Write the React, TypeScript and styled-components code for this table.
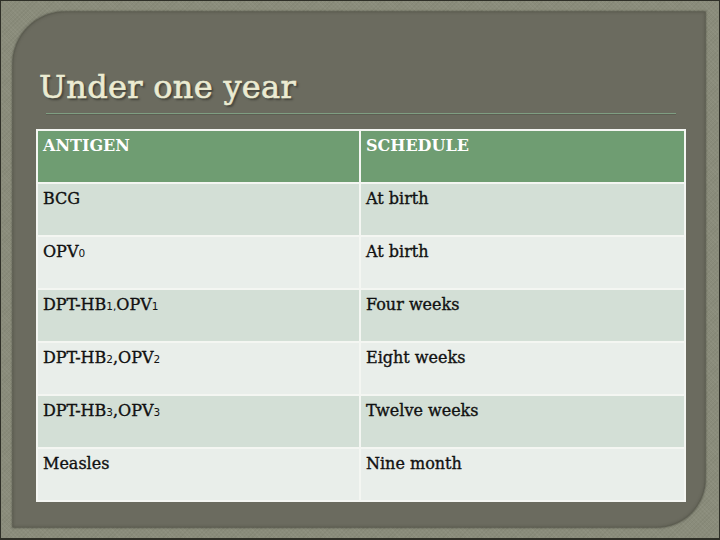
import React from "react";
import styled, { createGlobalStyle } from "styled-components";

const Global = createGlobalStyle`
  html, body { margin: 0; padding: 0; }
  body { width: 720px; height: 540px; overflow: hidden; background: #8a8c7b; }
  #root { width: 720px; height: 540px; }
`;

const Frame = styled.div`
  box-sizing: border-box;
  width: 720px;
  height: 540px;
  padding: 11px 14px 11px 12px;
  background-color: #8a8c7b;
  background-image: repeating-linear-gradient(45deg, rgba(255,255,255,0.04) 0 1px, transparent 1px 3px),
    repeating-linear-gradient(-45deg, rgba(0,0,0,0.04) 0 1px, transparent 1px 3px);
  border: 1px solid #2e2f27;
  border-bottom-width: 2px;
`;

const Panel = styled.div`
  box-sizing: border-box;
  width: 100%;
  height: 100%;
  background: #6b6b5f;
  border-radius: 52px 0 48px 0;
  box-shadow: 0 0 2px 1px rgba(40, 40, 32, 0.55), inset 0 0 3px rgba(60, 60, 50, 0.5);
  display: flex;
  flex-direction: column;
  padding: 57px 21px 0 23px;
`;

const Title = styled.h1`
  margin: 0 0 0 3px;
  font-family: "DejaVu Serif", serif;
  font-weight: normal;
  font-size: 32px;
  line-height: 36px;
  color: #ebebd2;
  -webkit-text-stroke: 0.6px #ebebd2;
  text-shadow: 2px 2px 2px rgba(30, 30, 25, 0.55);
  letter-spacing: 0.3px;
`;

const Rule = styled.div`
  height: 1px;
  margin: 8px 8px 0 10px;
  background: #7f9e82;
  box-shadow: 0 1px 0 #5d5e52;
`;

const Table = styled.table`
  margin-top: 15px;
  width: 650px;
  border-collapse: collapse;
  font-family: "DejaVu Serif", serif;
  font-size: 16px;
  color: #111;
  border: 1px solid #f4f6f2;
`;

const Row = styled.tr<{ $tone: "head" | "dark" | "light" }>`
  height: 53px;
  background: ${(p) =>
    p.$tone === "head" ? "#6f9d72" : p.$tone === "dark" ? "#d3dfd6" : "#e9eeea"};
  color: ${(p) => (p.$tone === "head" ? "#ffffff" : "#111111")};
  font-weight: ${(p) => (p.$tone === "head" ? "bold" : "normal")};
  -webkit-text-stroke: ${(p) => (p.$tone === "head" ? "0" : "0.35px #111")};
`;

const Cell = styled.td<{ $first?: boolean }>`
  box-sizing: border-box;
  width: ${(p) => (p.$first ? "323px" : "auto")};
  vertical-align: top;
  padding: 5px 5px 0 5px;
  border: 2px solid #f4f6f2;
  line-height: 20px;
`;

const Sub = styled.span`
  font-size: 10.5px;
  font-family: "DejaVu Sans", sans-serif;
  font-weight: normal;
  -webkit-text-stroke: 0;
`;

const rows: { a: React.ReactNode; s: string }[] = [
  { a: "BCG", s: "At birth" },
  { a: <>OPV<Sub>0</Sub></>, s: "At birth" },
  { a: <>DPT-HB<Sub>1,</Sub>OPV<Sub>1</Sub></>, s: "Four weeks" },
  { a: <>DPT-HB<Sub>2</Sub>,OPV<Sub>2</Sub></>, s: "Eight weeks" },
  { a: <>DPT-HB<Sub>3</Sub>,OPV<Sub>3</Sub></>, s: "Twelve weeks" },
  { a: "Measles", s: "Nine month" },
];

export default function App() {
  return (
    <>
      <Global />
      <Frame>
        <Panel>
          <Title>Under one year</Title>
          <Rule />
          <Table>
            <tbody>
              <Row $tone="head">
                <Cell $first>ANTIGEN</Cell>
                <Cell>SCHEDULE</Cell>
              </Row>
              {rows.map((r, i) => (
                <Row key={i} $tone={i % 2 === 0 ? "dark" : "light"}>
                  <Cell $first>{r.a}</Cell>
                  <Cell>{r.s}</Cell>
                </Row>
              ))}
            </tbody>
          </Table>
        </Panel>
      </Frame>
    </>
  );
}
